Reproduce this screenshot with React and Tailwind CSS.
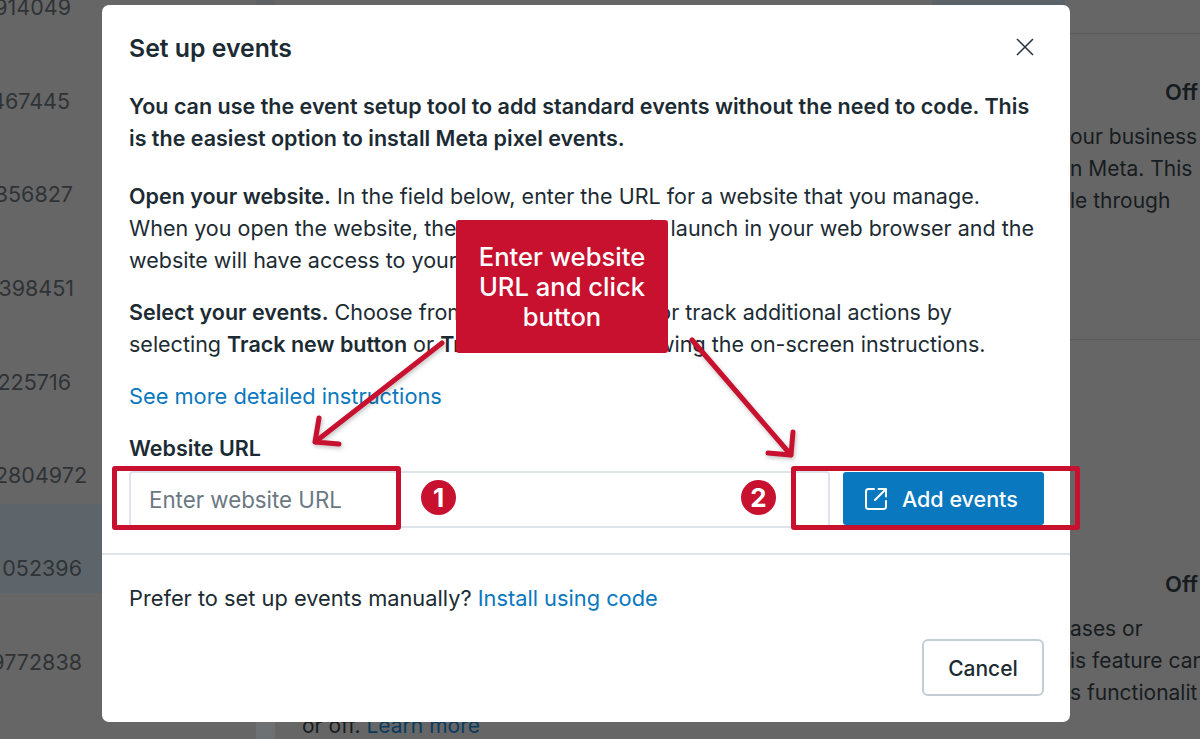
const rows = [
  { num: "914049", width: "w-[71px]", height: "h-[32px]", extra: "" },
  { num: "467445", width: "w-[70px]", height: "h-[94px]", extra: "" },
  { num: "356827", width: "w-[73px]", height: "h-[93px]", extra: "" },
  { num: "398451", width: "w-[74px]", height: "h-[94px]", extra: "" },
  { num: "225716", width: "w-[71px]", height: "h-[94px]", extra: "" },
  { num: "2804972", width: "w-[87px]", height: "h-[93px]", extra: "" },
  { num: "052396", width: "w-[82px]", height: "h-[89px]", extra: "mt-[4px] bg-[#5e656a]" },
  { num: "9772838", width: "w-[82px]", height: "h-[94px]", extra: "" },
];

function App() {
  return (
    <div className="relative w-[1200px] h-[739px] overflow-hidden bg-[#666666] font-['Inter',sans-serif] text-[21.5px]">

      {/* PAGE BEHIND THE DIALOG */}
      <div className="flex h-full">

        {/* ID COLUMN */}
        <div className="w-[256px] shrink-0 flex flex-col text-[#2f3336] leading-[32px]">
          {rows.map((row) => (
            <div key={row.num} className={`flex items-end justify-start pb-[9px] overflow-hidden ${row.height} ${row.extra}`}>
              <div className={`shrink-0 flex justify-end whitespace-nowrap ${row.width}`}>{row.num}</div>
            </div>
          ))}
        </div>

        <div className="w-[19px] shrink-0 bg-[#6d7174]">
          <div className="h-[5px] bg-[#5f6264]"></div>
        </div>

        {/* DETAIL COLUMN */}
        <div className="flex-1 min-w-0 flex flex-col text-[#171c20] text-[21px] leading-[32px] whitespace-nowrap">
          <div className="h-[33px] pl-[657px]">
            <div className="w-[133px] h-[5px] bg-[#5c6368]"></div>
          </div>
          <div className="h-[306px] border-t border-[#5a5a5a] pt-[42px] pl-[795px] overflow-hidden">
            <p className="pl-[95px] text-[22px] font-semibold mb-[13px]">Off</p>
            <p>our business</p>
            <p>n Meta. This</p>
            <p>le through</p>
          </div>
          <div className="h-[400px] border-t border-[#5a5a5a] pt-[228px] overflow-hidden">
            <p className="pl-[890px] text-[22px] font-semibold mb-[13px]">Off</p>
            <p className="pl-[795px]">ases or</p>
            <p className="pl-[795px]">is feature can</p>
            <p className="pl-[795px] mb-[1px]">s functionalit</p>
            <p className="pl-[27px]">or off. <span className="text-[#0b3c5e]">Learn more</span></p>
          </div>
        </div>
      </div>

      {/* DIALOG */}
      <div className="absolute left-[102px] top-[5px] w-[968px] h-[717px] bg-white rounded-[7px] flex flex-col text-[#1c2b33]">

        <div className="flex items-center justify-between pl-[27px] pr-[36px] pt-[27px]">
          <h1 className="text-[24.8px] leading-[32px] font-semibold">Set up events</h1>
          <svg className="-mt-[2px] -mr-[1px]" width="20" height="20" viewBox="0 0 20 20" fill="none" stroke="#2a3640" strokeWidth="1.6">
            <path d="M2 2 L18 18 M18 2 L2 18" />
          </svg>
        </div>

        <div className="pl-[27px] pr-[26px] pt-[26px] leading-[32px] flex flex-col grow">
          <p className="font-semibold mb-[26px] whitespace-nowrap">
            You can use the event setup tool to add standard events without the need to code. This
            <br />
            is the easiest option to install Meta pixel events.
          </p>

          <p className="mb-[20px] whitespace-nowrap">
            <span className="font-semibold">Open your website.</span> In the field below, enter the URL for a website that you manage.
            <br />
            When you open the website, the event setup tool will launch in your web browser and the
            <br />
            website will have access to your pixel.
          </p>

          <p className="mb-[20px] whitespace-nowrap">
            <span className="font-semibold">Select your events.</span> Choose from suggested events or track additional actions by
            <br />
            selecting <span className="font-semibold">Track new button</span> or <span className="font-semibold">Track a URL</span> and following the on-screen instructions.
          </p>

          <a className="text-[#0a78be] text-[21.8px] mb-[20px]">See more detailed instructions</a>

          <label className="font-semibold mb-[7px]">Website URL</label>

          <div className="flex gap-[13px] h-[57px]">
            <input
              placeholder="Enter website URL"
              className="flex-1 min-w-0 border-2 border-[#dfe4ec] rounded-[4px] px-[18px] text-[22.3px] text-[#1c2b33] placeholder:text-[#6b7883] outline-none"
            />
            <button className="w-[201px] mt-[1px] h-[53px] bg-[#0a78be] rounded-[3px] text-white font-medium flex items-center pl-[21px] gap-[14px]">
              <svg width="24" height="24" viewBox="0 0 24 24" fill="none" stroke="white" strokeWidth="2" strokeLinecap="round" strokeLinejoin="round">
                <path d="M10 2H4.5A2.5 2.5 0 0 0 2 4.5v15A2.5 2.5 0 0 0 4.5 22h15a2.5 2.5 0 0 0 2.5-2.5V14" />
                <path d="M11 13 L22 2 M14.5 2H22V9.5" />
              </svg>
              Add events
            </button>
          </div>
        </div>

        <div className="border-t-2 border-[#dfe4ea] pl-[27px] pr-[26px] pt-[27px] pb-[26px]">
          <p className="leading-[32px] text-[21.8px] mb-[25px]">
            Prefer to set up events manually? <a className="text-[#0a78be]">Install using code</a>
          </p>
          <div className="flex justify-end">
            <button className="w-[122px] h-[57px] pt-[2px] border-2 border-[#c4cdd5] rounded-[6px] text-[21px] font-medium">Cancel</button>
          </div>
        </div>
      </div>

      {/* ANNOTATIONS */}
      <svg className="absolute inset-0 pointer-events-none drop-shadow-[1px_2px_2px_rgba(0,0,0,0.25)]" width="1200" height="739" viewBox="0 0 1200 739" fill="none" stroke="#c8102f" strokeWidth="5" strokeLinecap="round" strokeLinejoin="round">
        <path d="M442 343 L315 442 M319 418 L315 442 L339 444" />
        <path d="M692 340 L791 455 M793 432 L791 455 L768 453" />
      </svg>

      <div className="absolute left-[456px] top-[220px] w-[212px] h-[133px] bg-[#c8102f] rounded-[3px] text-white text-[25.6px] leading-[30px] font-medium text-center pt-[22px]">
        Enter website
        <br />
        URL and click
        <br />
        button
      </div>

      <div className="absolute left-[112px] top-[466px] w-[289px] h-[64px] border-[5px] border-[#c8102f] rounded-[3px]"></div>
      <div className="absolute left-[791px] top-[466px] w-[289px] h-[64px] border-[5px] border-[#c8102f] rounded-[3px]"></div>

      <div className="absolute left-[421px] top-[480px] w-[35px] h-[35px] rounded-full bg-[#c8102f] text-white text-[26px] font-bold flex items-center justify-center">1</div>
      <div className="absolute left-[741px] top-[480px] w-[35px] h-[35px] rounded-full bg-[#c8102f] text-white text-[26px] font-bold flex items-center justify-center">2</div>
    </div>
  );
}

export default App;
